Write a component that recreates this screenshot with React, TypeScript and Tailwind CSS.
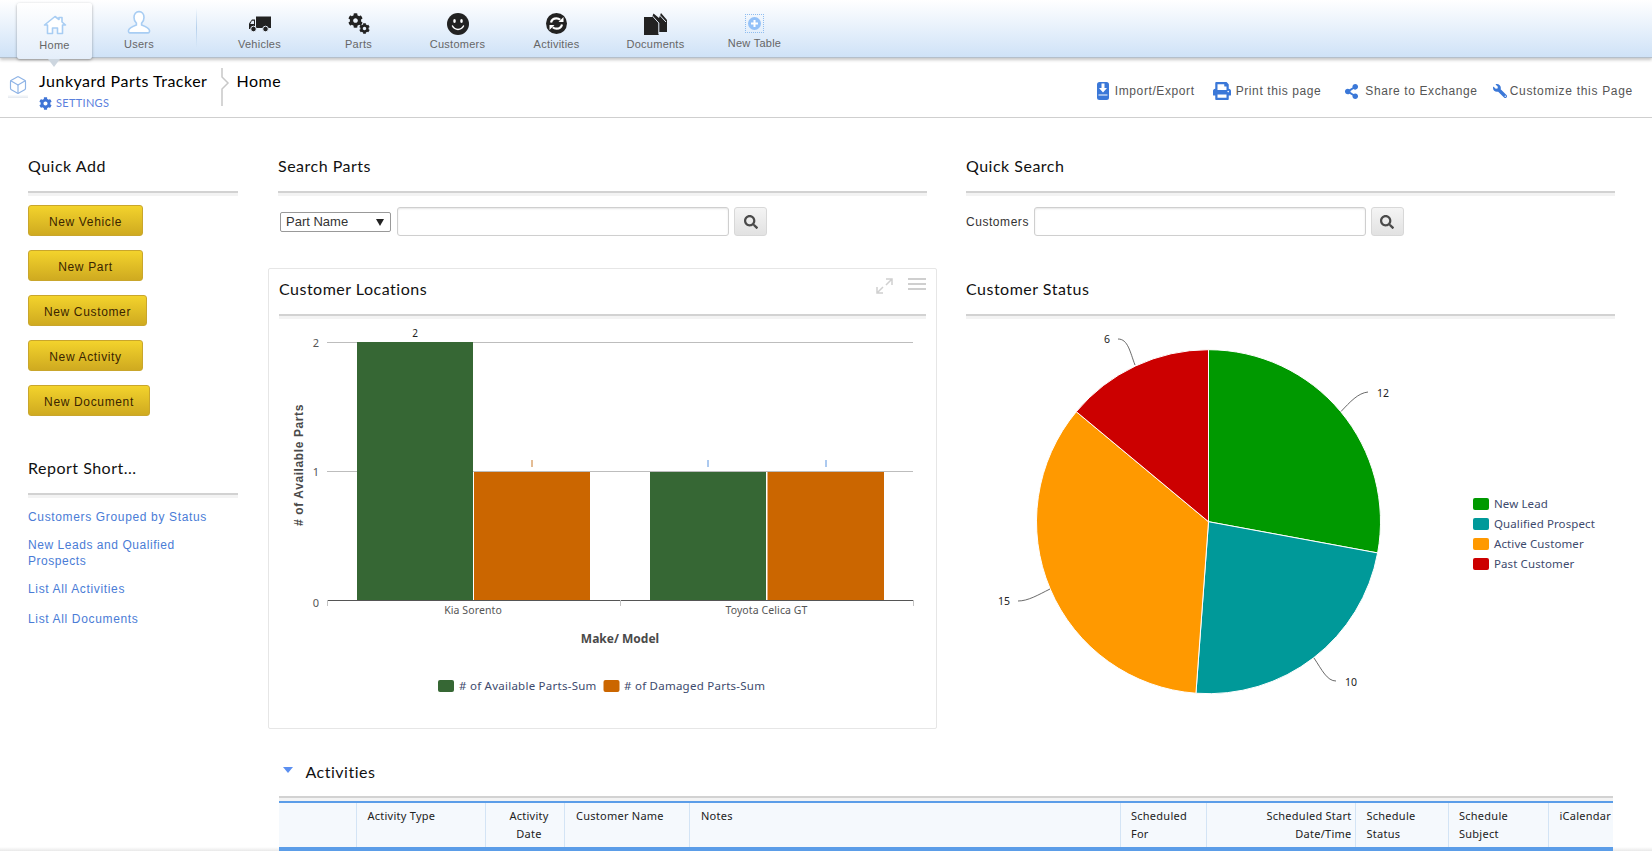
import { FaCog, FaPrint, FaSearch, FaShareAlt, FaWrench } from "react-icons/fa";
import { Box } from "lucide-react";

const head = "font-['Lato',sans-serif] text-[16px] leading-6 tracking-[0.5px] text-[#111]";
const arial = "font-['Liberation_Sans',Arial,sans-serif]";
const noto = "font-['Noto_Sans',sans-serif]";
const navLabel = `${arial} text-[11px] leading-[14px] tracking-[0.25px] text-[#666]`;

function Divider() {
  return <div className="h-[5px] border-t-2 border-[#d2d2d2] bg-[#f3f3f3]" />;
}

function Section({ title }: { title: string }) {
  return (
    <div>
      <h2 className={`${head} mb-[13px]`}>{title}</h2>
      <Divider />
    </div>
  );
}

function HomeIcon() {
  return (
    <svg width="24" height="20" viewBox="0 0 24 20">
      <path d="M12 1.500 1.500 10h3v8.500h5v-5.500h5v5.500h5V10h3l-3.500-3V2.500h-3v2z" fill="#fff" stroke="#a8cdf3" strokeWidth="1.600" strokeLinejoin="round" />
    </svg>
  );
}

function UserIcon() {
  return (
    <svg width="24" height="25" viewBox="0 0 24 24" preserveAspectRatio="none">
      <path d="M12 1.500c3 0 5 2.400 5 5.600 0 2.400-1 4.400-2.400 5.600v1.600c3.400 1.200 7.400 2.600 7.900 5.200.2 1.200-.4 2.500-1.500 2.500H3c-1.100 0-1.700-1.300-1.500-2.500.5-2.600 4.500-4 7.900-5.200v-1.600C8 11.500 7 9.500 7 7.100c0-3.200 2-5.600 5-5.600z" fill="#fff" stroke="#a8cdf3" strokeWidth="1.600" />
    </svg>
  );
}

function TruckIcon() {
  return (
    <svg width="22" height="16" viewBox="0 0 22 16" fill="#222">
      <path d="M7 0.500h15v11.500H7z" />
      <path d="M6 3.500H3L0 7.500V13h6z" />
      <path d="M2.900 4.800H5V8H1.200z" fill="#e5eefa" />
      <circle cx="4.500" cy="13" r="2.800" stroke="#e5eefa" />
      <circle cx="16.500" cy="13" r="2.800" stroke="#e5eefa" />
    </svg>
  );
}

function GearsIcon() {
  return (
    <div className="flex h-[22px] w-[22px] items-start">
      <FaCog className="h-[15px] w-[15px] text-[#222]" />
      <FaCog className="-ml-[4px] mt-[10px] h-[11px] w-[11px] text-[#222]" />
    </div>
  );
}

function SmileIcon() {
  return (
    <svg width="22" height="22" viewBox="0 0 22 22">
      <circle cx="11" cy="11" r="11" fill="#222" />
      <ellipse cx="7.500" cy="8" rx="1.300" ry="1.900" fill="#fff" />
      <ellipse cx="14.500" cy="8" rx="1.300" ry="1.900" fill="#fff" />
      <path d="M5.500 13c1.300 2.400 3.200 3.400 5.500 3.400s4.200-1 5.500-3.400" fill="none" stroke="#fff" strokeWidth="1.500" strokeLinecap="round" />
    </svg>
  );
}

function SyncIcon() {
  return (
    <svg width="21" height="21" viewBox="0 0 21 21">
      <circle cx="10.500" cy="10.500" r="10.500" fill="#222" />
      <path d="M5 9.500c.6-2.500 2.800-4.200 5.400-4.200 1.500 0 2.800.5 3.800 1.500" fill="none" stroke="#fff" strokeWidth="2.200" />
      <path d="M12.500 9h5V4z" fill="#fff" />
      <path d="M16 11.500c-.6 2.500-2.800 4.200-5.400 4.200-1.500 0-2.800-.5-3.800-1.500" fill="none" stroke="#fff" strokeWidth="2.200" />
      <path d="M8.500 12h-5v5z" fill="#fff" />
    </svg>
  );
}

function DocsIcon() {
  return (
    <svg width="23" height="22" viewBox="0 0 23 22">
      <path d="M0 4h8l1.500-3.500L15 5l2-5 6 7v12h-8v3H0z" fill="#222" />
      <path d="M8 2.500l6.800 7.500v11.500M15.500 2l6.500 7" fill="none" stroke="#e6effa" strokeWidth="1" />
    </svg>
  );
}

function NewTableIcon() {
  return (
    <div className="flex h-[19px] w-[19px] items-center justify-center border border-dotted border-[#8fbdf0]">
      <svg width="13" height="13" viewBox="0 0 13 13">
        <circle cx="6.500" cy="6.500" r="6.500" fill="#93c1f8" />
        <path d="M6.500 3v7M3 6.500h7" stroke="#fff" strokeWidth="2" />
      </svg>
    </div>
  );
}

function NavItem({ label, icon, lift }: { label: string; icon: React.ReactNode; lift?: boolean }) {
  return (
    <div className="flex h-[58px] w-[99px] flex-col items-center pt-[10px]">
      <div className="flex h-[27px] items-center">{icon}</div>
      <span className={`${navLabel} ${lift ? "-mt-[1px]" : ""}`}>{label}</span>
    </div>
  );
}

function TopNav() {
  return (
    <nav className="relative z-10 flex h-[58px] border-b border-[#b4bfca] bg-gradient-to-b from-[#ffffff] to-[#cfe2f7] pl-[17px] shadow-[0_2px_3px_rgba(0,0,0,0.22)]">
      <div className="relative mt-[3px] flex h-[56px] w-[75px] flex-col items-center rounded-[3px] bg-gradient-to-b from-[#ffffff] to-[#e4eefa] pt-[8px] shadow-[0_1px_3px_rgba(0,0,0,0.35)]">
        <div className="flex h-[27px] items-center">
          <HomeIcon />
        </div>
        <span className={navLabel}>Home</span>
        <div className="absolute left-[31px] top-[56px] h-0 w-0 border-x-[6px] border-t-[8px] border-x-transparent border-t-[#cdd6df]" />
      </div>
      <div className="flex h-[58px] w-[94px] flex-col items-center pt-[10px]">
        <div className="-mt-[1px] mb-[1px] flex h-[27px] items-center">
          <UserIcon />
        </div>
        <span className={navLabel}>Users</span>
      </div>
      <div className="ml-[10px] mr-[13px] mt-[8px] h-[40px] w-px bg-gradient-to-b from-transparent via-[#b5d0ec] to-transparent" />
      <NavItem label="Vehicles" icon={<TruckIcon />} />
      <NavItem label="Parts" icon={<GearsIcon />} />
      <NavItem label="Customers" icon={<SmileIcon />} />
      <NavItem label="Activities" icon={<SyncIcon />} />
      <NavItem label="Documents" icon={<DocsIcon />} />
      <NavItem label="New Table" icon={<NewTableIcon />} lift />
    </nav>
  );
}

function ImportIcon() {
  return (
    <svg width="12" height="18" viewBox="0 0 12 18">
      <rect width="12" height="18" rx="2.500" fill="#3b78d8" />
      <path d="M4.500 1.500h3V6H10L6 10.500 2 6h2.500z" fill="#fff" />
      <path d="M1.500 13h9" stroke="#fff" strokeWidth="1" />
    </svg>
  );
}

function HeaderAction({ icon, label, className, tracking }: { icon: React.ReactNode; label: string; className: string; tracking: string }) {
  return (
    <div className={`flex items-center ${className}`}>
      {icon}
      <span className={`${arial} text-[12px] leading-4 ${tracking} text-[#555]`}>{label}</span>
    </div>
  );
}

function PageHeader() {
  return (
    <header className="flex h-[60px] border-b border-[#cfcfcf]">
      <div className="ml-[8px] mt-[17px] h-[23px] w-[20px] bg-gradient-to-b from-transparent from-[85%] to-[#e3e8ee]">
        <Box className="h-[20px] w-[20px] text-[#8fb4e6]" strokeWidth={1.4} />
      </div>
      <div className="ml-[11px] mt-[11px]">
        <div className={`${head} text-black`}>Junkyard Parts Tracker</div>
        <div className="mt-[3px] flex items-center gap-[4px]">
          <FaCog className="h-[13px] w-[13px] text-[#3f74d6]" />
          <span className="font-['Lato',sans-serif] text-[11px] leading-[14px] tracking-[0.3px] text-[#5a80dd]">SETTINGS</span>
        </div>
      </div>
      <svg className="ml-[14px] mt-[10px]" width="9" height="38" viewBox="0 0 9 38" fill="none" stroke="#c8c8c8" strokeWidth="1.500">
        <path d="M1 0v9l6 6-6 6v17" />
      </svg>
      <div className={`${head} ml-[6px] mt-[11px] text-black`}>Home</div>
      <div className="ml-auto mr-[19px] mt-[23px] flex h-[20px]">
        <HeaderAction icon={<ImportIcon />} label="Import/Export" className="gap-[6px]" tracking="tracking-[0.6px]" />
        <HeaderAction icon={<FaPrint className="h-[18px] w-[18px] text-[#3b78d8]" />} label="Print this page" className="ml-[18px] gap-[5px]" tracking="tracking-[0.6px]" />
        <HeaderAction icon={<FaShareAlt className="h-[15px] w-[15px] text-[#3b78d8]" />} label="Share to Exchange" className="ml-[23px] gap-[6px]" tracking="tracking-[0.6px]" />
        <HeaderAction icon={<FaWrench className="h-[14px] w-[14px] -scale-x-100 text-[#3b78d8]" />} label="Customize this Page" className="ml-[15px] gap-[3px]" tracking="tracking-[0.7px]" />
      </div>
    </header>
  );
}

function YellowButton({ label, width }: { label: string; width: string }) {
  return (
    <button type="button" className={`${arial} h-[31px] ${width} rounded-[3px] border border-[#c9a62c] bg-gradient-to-b from-[#f3d32c] to-[#cfaa20] pt-[2px] text-[12px] tracking-[0.65px] text-[#3a2500]`}>
      {label}
    </button>
  );
}

function Sidebar() {
  return (
    <aside className="ml-[28px] w-[210px] shrink-0">
      <Section title="Quick Add" />
      <div className="mt-[9px] flex flex-col items-start gap-[14px]">
        <YellowButton label="New Vehicle" width="w-[115px]" />
        <YellowButton label="New Part" width="w-[115px]" />
        <YellowButton label="New Customer" width="w-[119px]" />
        <YellowButton label="New Activity" width="w-[115px]" />
        <YellowButton label="New Document" width="w-[122px]" />
      </div>
      <div className="mt-[40px]">
        <h2 className={`${head} mb-[13px]`}>Report Short...</h2>
        <Divider />
      </div>
      <div className={`${arial} mt-[11px] flex flex-col gap-[12px] text-[12px] leading-4 tracking-[0.65px] text-[#4a7cd6]`}>
        <a>Customers Grouped by Status</a>
        <a className="tracking-[0.55px]">
          New Leads and Qualified
          <br />
          Prospects
        </a>
        <a>List All Activities</a>
        <a className="mt-[2px]">List All Documents</a>
      </div>
    </aside>
  );
}

function SearchInput() {
  return <input className="h-[29px] rounded-[3px] border border-[#cfcfcf] bg-white shadow-[inset_0_1px_2px_rgba(0,0,0,0.1)]" />;
}

function SearchButton() {
  return (
    <button type="button" className="flex h-[29px] w-[33px] items-center justify-center rounded-[3px] border border-[#d8d8d8] bg-gradient-to-b from-[#f4f4f4] to-[#e2e2e2]">
      <FaSearch className="h-[14px] w-[14px] text-[#4a4a4a]" />
    </button>
  );
}

function ExpandIcon() {
  return (
    <svg width="17" height="16" viewBox="0 0 17 16" fill="none" stroke="#d0d0d0" strokeWidth="1.500">
      <path d="M10 1h6v6M16 1l-6 6M1 9v6h6M1 15l6-6" />
    </svg>
  );
}

function BarChart() {
  const text = "font-['Noto_Sans',sans-serif]";
  return (
    <svg width="647" height="405" viewBox="279 319 647 405" className="block">
      <path d="M327 342.500H913M327 471.500H913" stroke="#bdbdbd" strokeWidth="1" />
      <rect x="357" y="342" width="116" height="258" fill="#366734" />
      <rect x="474" y="472" width="116" height="128" fill="#cb6600" />
      <rect x="650" y="472" width="116" height="128" fill="#366734" />
      <rect x="767.500" y="472" width="116.500" height="128" fill="#cb6600" />
      <path d="M327 600.500H913.500" stroke="#555" strokeWidth="1.200" />
      <path d="M327.500 600v6M620.500 600v6M913.500 600v6" stroke="#c4c4c4" strokeWidth="1" />
      <g className={text} fontSize="11" fill="#555" textAnchor="middle">
        <text x="316" y="347">2</text>
        <text x="316" y="476">1</text>
        <text x="316" y="607">0</text>
        <text x="473" y="614" fontSize="10.500" letterSpacing="0.1">Kia Sorento</text>
        <text x="766.500" y="614" fontSize="10.500" letterSpacing="0.1">Toyota Celica GT</text>
      </g>
      <g className={text} fontSize="10" fill="#222" textAnchor="middle">
        <text x="415" y="337">2</text>
      </g>
      <path d="M532 460v7" stroke="#c97a2a" strokeWidth="1" />
      <path d="M708 460v7M826 460v7" stroke="#5a94e0" strokeWidth="1" />
      <text className={text} x="620" y="643" fontSize="12" fontWeight="700" fill="#4a4a4a" textAnchor="middle">Make/ Model</text>
      <text className={arial} transform="translate(303 465) rotate(-90)" fontSize="12" fontWeight="700" fill="#4a4a4a" letterSpacing="0.6" textAnchor="middle"># of Available Parts</text>
      <rect x="438" y="680" width="16" height="12" rx="2" fill="#366734" />
      <rect x="603.500" y="680" width="16" height="12" rx="2" fill="#cb6600" />
      <g className={text} fontSize="11.500" fill="#3d4a6d" letterSpacing="0.25">
        <text x="459" y="690">{"# of Available Parts-Sum"}</text>
        <text x="624" y="690">{"# of Damaged Parts-Sum"}</text>
      </g>
    </svg>
  );
}

const pieData = [
  { value: 12, color: "#009900" },
  { value: 10, color: "#009999" },
  { value: 15, color: "#ff9900" },
  { value: 6, color: "#cc0000" },
];

function PieChart() {
  const cx = 1208.5;
  const cy = 521.7;
  const r = 172;
  const total = pieData.reduce((s, d) => s + d.value, 0);
  let acc = 0;
  const slices = pieData.map((d) => {
    const a0 = (acc / total) * Math.PI * 2;
    acc += d.value;
    const a1 = (acc / total) * Math.PI * 2;
    const large = a1 - a0 > Math.PI ? 1 : 0;
    const p = `M${cx} ${cy}L${cx + r * Math.sin(a0)} ${cy - r * Math.cos(a0)}A${r} ${r} 0 ${large} 1 ${cx + r * Math.sin(a1)} ${cy - r * Math.cos(a1)}Z`;
    return { p, color: d.color };
  });
  const text = "font-['Noto_Sans',sans-serif]";
  return (
    <svg width="649" height="405" viewBox="966 319 649 405" className="block">
      {slices.map((s) => (
        <path key={s.color} d={s.p} fill={s.color} stroke="#fff" strokeWidth="1" />
      ))}
      <g fill="none" stroke="#444" strokeWidth="0.800">
        <path d="M1341 411.500C1350 402 1358 393 1368 392" />
        <path d="M1314 658C1322 670 1327 681 1336 681" />
        <path d="M1050 589C1038 595 1028 601 1018 601" />
        <path d="M1135 365C1130 352 1128 339 1118 339" />
      </g>
      <g className={text} fontSize="10.500" fill="#222" textAnchor="middle">
        <text x="1383" y="397">12</text>
        <text x="1351" y="686">10</text>
        <text x="1004" y="605">15</text>
        <text x="1107" y="343">6</text>
      </g>
      {["New Lead", "Qualified Prospect", "Active Customer", "Past Customer"].map((label, i) => (
        <g key={label}>
          <rect x="1473" y={498 + i * 20} width="16" height="12" rx="2" fill={pieData[i].color} />
          <text className={text} x="1494" y={508 + i * 20} fontSize="11.500" letterSpacing="0.1" fill="#3d4a6d">
            {label}
          </text>
        </g>
      ))}
    </svg>
  );
}

const columns = [
  { label: "", w: "w-[77px]", cls: "" },
  { label: "Activity Type", w: "w-[129.500px]", cls: "pl-[11px] text-left" },
  { label: "Activity Date", w: "w-[79px]", cls: "pl-[15px] pr-[7px] text-center" },
  { label: "Customer Name", w: "w-[125px]", cls: "pl-[11px] text-left" },
  { label: "Notes", w: "w-[431px]", cls: "pl-[11px] text-left" },
  { label: "Scheduled For", w: "w-[85.500px]", cls: "pl-[10px] text-left" },
  { label: "Scheduled Start Date/Time", w: "w-[149px]", cls: "pl-[20px] pr-[3px] text-right" },
  { label: "Schedule Status", w: "w-[93.500px]", cls: "pl-[11px] text-left" },
  { label: "Schedule Subject", w: "w-[99.500px]", cls: "pl-[10px] text-left" },
  { label: "iCalendar", w: "w-[65px]", cls: "pl-[11px] text-left" },
];

function ActivitiesTable() {
  return (
    <section className="relative z-10 ml-[11px] w-[1334px]">
      <div className="mb-[12px] flex items-center">
        <div className="mb-[4px] ml-[4px] h-0 w-0 border-x-[5px] border-t-[6px] border-x-transparent border-t-[#5b8ff0]" />
        <h2 className={`${head} ml-[12.500px]`}>Activities</h2>
      </div>
      <Divider />
      <table className="w-full table-fixed border-t-2 border-b-[5px] border-t-[#5b9de8] border-b-[#5b9de8] bg-[#f5f9fd]">
        <thead>
          <tr>
            {columns.map((c, i) => (
              <th key={i} className={`${c.w} ${c.cls} ${noto} h-[47px] border-r border-[#d3e4f5] pt-[4px] align-top text-[11px] font-normal leading-[18px] tracking-[0.25px] text-[#222] last:border-r-0`}>
                {c.label}
              </th>
            ))}
          </tr>
        </thead>
      </table>
    </section>
  );
}

export default function App() {
  return (
    <div className="relative h-[851px] w-[1652px] overflow-hidden bg-white">
      <TopNav />
      <PageHeader />
      <main className="flex pt-[36px]">
        <Sidebar />
        <div className="ml-[30px]">
          <div className="flex">
            <div className="w-[669px]">
              <div className="px-[10px]">
                <Section title="Search Parts" />
                <div className="mt-[11px] flex items-center">
                  <div className="relative ml-[2px] h-[20px] w-[111px]">
                    <select className={`${arial} block h-[20px] w-[111px] appearance-none rounded-[2px] border border-[#999] bg-white pl-[5px] text-[13px] leading-[18px] text-[#333]`}>
                      <option>Part Name</option>
                    </select>
                    <div className="absolute right-[7px] top-[7px] h-0 w-0 border-x-[4px] border-t-[7px] border-x-transparent border-t-[#222]" />
                  </div>
                  <div className="ml-[6px] mr-[5px] flex w-[332px] flex-col">
                    <SearchInput />
                  </div>
                  <SearchButton />
                </div>
              </div>
              <div className="mt-[32px] h-[461px] rounded-[2px] border border-[#e6e6e6] px-[10px] pt-[8px]">
                <div className="mb-[13px] flex">
                  <h2 className={head}>Customer Locations</h2>
                  <div className="ml-auto flex gap-[15px] pt-[1px]">
                    <ExpandIcon />
                    <div className="flex h-[12px] w-[18px] flex-col justify-between">
                      <div className="h-[2px] bg-[#cfcfcf]" />
                      <div className="h-[2px] bg-[#cfcfcf]" />
                      <div className="h-[2px] bg-[#cfcfcf]" />
                    </div>
                  </div>
                </div>
                <Divider />
                <BarChart />
              </div>
            </div>
            <div className="ml-[29px] w-[649px]">
              <Section title="Quick Search" />
              <div className="mt-[11px] flex items-center">
                <span className={`${arial} text-[12px] tracking-[0.55px] text-[#333]`}>Customers</span>
                <div className="ml-[5px] mr-[5px] flex w-[332px] flex-col">
                  <SearchInput />
                </div>
                <SearchButton />
              </div>
              <div className="mt-[32px] pt-[9px]">
                <h2 className={`${head} mb-[13px]`}>Customer Status</h2>
                <Divider />
                <PieChart />
              </div>
            </div>
          </div>
        </div>
      </main>
      <div className="mt-[31px]">
        <div className="ml-[268px]">
          <ActivitiesTable />
        </div>
      </div>
      <div className="absolute inset-x-0 bottom-0 h-[4px] bg-gradient-to-b from-[#ffffff] to-[#e9e9e9]" />
    </div>
  );
}
